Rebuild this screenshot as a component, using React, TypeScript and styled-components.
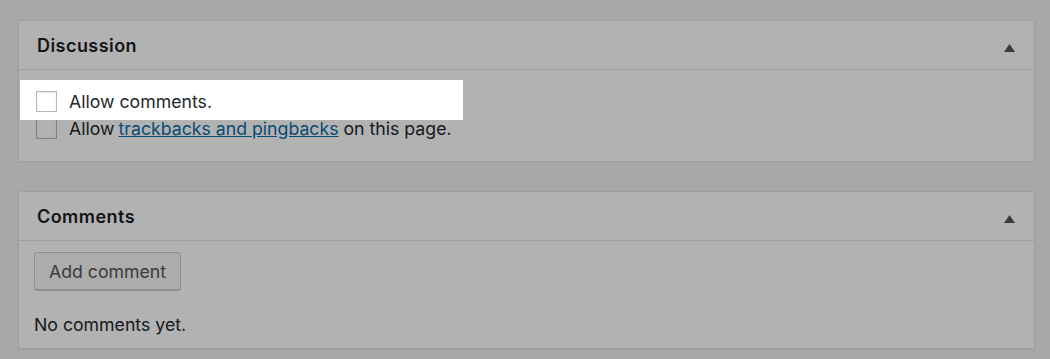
import React from "react";
import styled, { createGlobalStyle } from "styled-components";

const GlobalStyle = createGlobalStyle`
  html, body {
    margin: 0;
    padding: 0;
    background: #f1f1f1;
    font-family: Inter, "Liberation Sans", Arial, sans-serif;
    color: #444;
  }
`;

const Page = styled.div`
  display: flex;
  flex-direction: column;
  gap: 29px;
  padding: 20px 15px 9px 18px;
`;

const Overlay = styled.div`
  position: fixed;
  inset: 0;
  background: rgba(0, 0, 0, 0.3);
  z-index: 1;
`;

const Panel = styled.section`
  background: #fff;
  border: 1px solid #e5e5e5;
  box-shadow: 0 1px 1px rgba(0, 0, 0, 0.04);
`;

const PanelHeader = styled.div`
  display: flex;
  align-items: center;
  justify-content: space-between;
  height: 48px;
  padding: 0 19px 0 18px;
  border-bottom: 1px solid #e5e5e5;
`;

const PanelTitle = styled.h2`
  margin: 0;
  font-size: 18px;
  font-weight: 600;
  letter-spacing: 0.45px;
  color: #1d2125;
`;

const Toggle = styled.svg`
  width: 11px;
  height: 8px;
  margin-top: 5px;
  fill: #555;
`;

const PanelBody = styled.div<{ $pad: string }>`
  padding: ${(p) => p.$pad};
`;

const OptionRow = styled.label<{ $spotlight?: boolean }>`
  display: flex;
  align-items: center;
  height: 27px;
  font-size: 17.7px;
  color: #23282d;
  ${(p) =>
    p.$spotlight &&
    `
    position: relative;
    z-index: 2;
    &::before {
      content: "";
      position: absolute;
      left: -16px;
      top: -8px;
      bottom: -5px;
      width: 443px;
      background: #fff;
      z-index: -1;
    }
  `}
`;

const Checkbox = styled.span`
  box-sizing: border-box;
  width: 21px;
  height: 21px;
  margin-right: 12px;
  border: 1px solid #b4b9be;
  background: #fff;
  box-shadow: inset 0 1px 2px rgba(0, 0, 0, 0.1);
  flex: none;
`;

const Link = styled.a`
  color: #0a6fa5;
  text-decoration: underline;
  margin: 0 5px 0 4px;
`;

const Button = styled.button`
  display: inline-flex;
  align-items: center;
  height: 38px;
  padding: 0 14px;
  font-family: inherit;
  font-size: 17.7px;
  color: #555;
  background: #f7f7f7;
  border: 1px solid #ccc;
  border-radius: 3px;
  box-shadow: 0 1px 0 #ccc;
`;

const Note = styled.p`
  margin: 21px 0 0;
  font-size: 17.7px;
  line-height: 27px;
  color: #23282d;
`;

const Arrow = () => (
  <Toggle viewBox="0 0 11 8">
    <polygon points="5.5,0 11,8 0,8" />
  </Toggle>
);

export default function App() {
  return (
    <>
      <GlobalStyle />
      <Page>
        <Panel>
          <PanelHeader>
            <PanelTitle>Discussion</PanelTitle>
            <Arrow />
          </PanelHeader>
          <PanelBody $pad="18px 17px 19px">
            <OptionRow $spotlight>
              <Checkbox />
              Allow comments.
            </OptionRow>
            <OptionRow>
              <Checkbox />
              Allow<Link href="#">trackbacks and pingbacks</Link>on this page.
            </OptionRow>
          </PanelBody>
        </Panel>
        <Panel>
          <PanelHeader>
            <PanelTitle>Comments</PanelTitle>
            <Arrow />
          </PanelHeader>
          <PanelBody $pad="11px 15px 10px">
            <Button type="button">Add comment</Button>
            <Note>No comments yet.</Note>
          </PanelBody>
        </Panel>
      </Page>
      <Overlay />
    </>
  );
}
